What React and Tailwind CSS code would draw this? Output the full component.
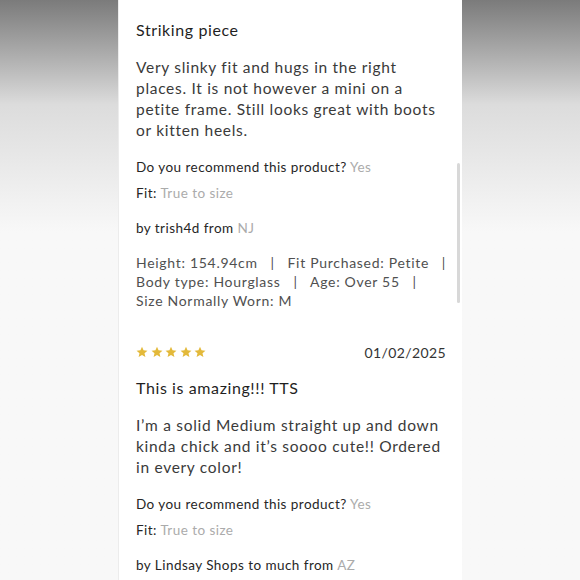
import React from "react";

const reviews = [
  {
    title: "Striking piece",
    body: [
      "Very slinky fit and hugs in the right",
      "places. It is not however a mini on a",
      "petite frame. Still looks great with boots",
      "or kitten heels.",
    ],
    author: "trish4d",
    from: "NJ",
    details: [
      "Height: 154.94cm \u00a0 | \u00a0 Fit Purchased: Petite \u00a0 |",
      "Body type: Hourglass \u00a0 | \u00a0 Age: Over 55 \u00a0 |",
      "Size Normally Worn: M",
    ],
  },
  {
    stars: 5,
    date: "01/02/2025",
    title: "This is amazing!!! TTS",
    body: [
      "I’m a solid Medium straight up and down",
      "kinda chick and it’s soooo cute!! Ordered",
      "in every color!",
    ],
    author: "Lindsay Shops to much",
    from: "AZ",
  },
];

const Star = () => (
  <svg width="12" height="12" viewBox="0 0 24 24" className="fill-[#e3b93a]">
    <path d="M12 1.5l3.1 7.2 7.8.6-5.9 5.1 1.8 7.6L12 18l-6.8 4 1.8-7.6L1.1 9.3l7.8-.6z" />
  </svg>
);

const Review = ({ review, first }) => (
  <div className={first ? "pt-[19px]" : "mt-[32px]"}>
    {review.stars && (
      <div className="flex items-center justify-between h-5 mb-[15px]">
        <div className="flex gap-[2.5px]">
          {Array.from({ length: review.stars }).map((_, i) => (
            <Star key={i} />
          ))}
        </div>
        <span className="text-[14px] tracking-[0.4px] text-[#333]">{review.date}</span>
      </div>
    )}
    <h3 className="text-[16px] leading-[22px] tracking-[0.6px] text-[#1f1f1f]">{review.title}</h3>
    <p className="mt-[16px] text-[15.5px] leading-[21px] tracking-[0.7px] text-[#3a3a3a]">
      {review.body.map((line, i) => (
        <span key={i} className="block whitespace-nowrap">{line}</span>
      ))}
    </p>
    <p className="mt-[17px] text-[13.5px] leading-[18px] tracking-[0.45px]">
      Do you recommend this product? <span className="text-[#ababab]">Yes</span>
    </p>
    <p className="mt-[8px] text-[13.5px] leading-[18px] tracking-[0.45px]">
      Fit: <span className="text-[#ababab]">True to size</span>
    </p>
    <p className="mt-[17px] text-[13.5px] leading-[18px] tracking-[0.45px]">
      by {review.author} from <span className="text-[#ababab]">{review.from}</span>
    </p>
    {review.details && (
      <p className="mt-[16px] text-[14px] leading-[19px] tracking-[0.7px] text-[#505050]">
        {review.details.map((line, i) => (
          <span key={i} className="block whitespace-nowrap">{line}</span>
        ))}
      </p>
    )}
  </div>
);

export default function App() {
  return (
    <div
      className="w-[580px] h-[580px] overflow-hidden flex bg-gradient-to-b from-[#7b7b7b] via-[#dcdcdc] via-[18%] to-[#f8f8f8] to-[40%]"
      style={{ fontFamily: "Lato, 'Open Sans', sans-serif" }}
    >
      <div className="w-[118px] shrink-0" />
      <div className="relative w-[344px] h-full bg-white pl-[17px] pr-[16px] text-[#262626] border-l border-[#ececec]">
        {reviews.map((r, i) => (
          <Review key={i} review={r} first={i === 0} />
        ))}
        <div className="absolute left-[338px] top-[163px] w-[3px] h-[140px] rounded bg-[#d8d8d8]" />
      </div>
    </div>
  );
}
